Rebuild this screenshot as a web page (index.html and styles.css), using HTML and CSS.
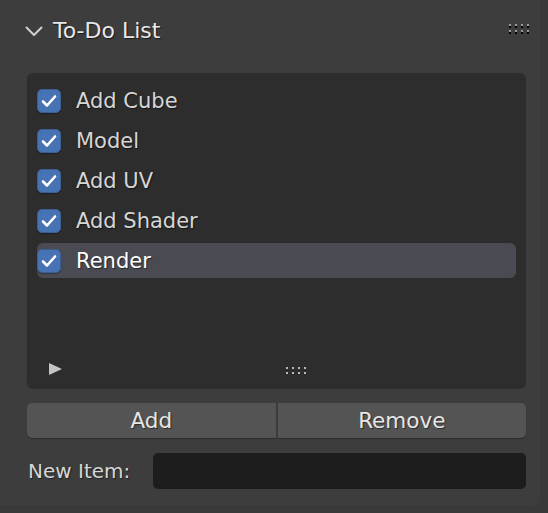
FILE: index.html
```html
<!DOCTYPE html>
<html>
<head>
<meta charset="utf-8">
<link rel="stylesheet" href="styles.css">
</head>
<body>
<div class="panel">
  <div class="header">
    <svg class="chevron" width="18" height="11" viewBox="0 0 18 11"><path d="M1.5 1.5 L9 9 L16.5 1.5" fill="none" stroke="#d0d0d0" stroke-width="2" stroke-linecap="round" stroke-linejoin="round"/></svg>
    <span class="title">To-Do List</span>
    <svg class="grip" width="22" height="10" viewBox="0 0 22 10">
      <g fill="#000"><rect x="1" y="1" width="2" height="3"/><rect x="7" y="1" width="2" height="3"/><rect x="13" y="1" width="2" height="3"/><rect x="19" y="1" width="2" height="3"/><rect x="1" y="7" width="2" height="3"/><rect x="7" y="7" width="2" height="3"/><rect x="13" y="7" width="2" height="3"/><rect x="19" y="7" width="2" height="3"/></g>
      <g fill="#9a9a9a"><rect x="1" y="0" width="2" height="2"/><rect x="7" y="0" width="2" height="2"/><rect x="13" y="0" width="2" height="2"/><rect x="19" y="0" width="2" height="2"/><rect x="1" y="6" width="2" height="2"/><rect x="7" y="6" width="2" height="2"/><rect x="13" y="6" width="2" height="2"/><rect x="19" y="6" width="2" height="2"/></g>
    </svg>
  </div>
  <div class="content">
    <div class="list">
      <div class="rows">
        <div class="row"><span class="check"><svg width="16" height="14" viewBox="0 0 16 14"><path d="M2 7.5 L6 11.5 L14 2.5" fill="none" stroke="#fff" stroke-width="2.6" stroke-linecap="round" stroke-linejoin="round"/></svg></span><span class="label">Add Cube</span></div>
        <div class="row"><span class="check"><svg width="16" height="14" viewBox="0 0 16 14"><path d="M2 7.5 L6 11.5 L14 2.5" fill="none" stroke="#fff" stroke-width="2.6" stroke-linecap="round" stroke-linejoin="round"/></svg></span><span class="label">Model</span></div>
        <div class="row"><span class="check"><svg width="16" height="14" viewBox="0 0 16 14"><path d="M2 7.5 L6 11.5 L14 2.5" fill="none" stroke="#fff" stroke-width="2.6" stroke-linecap="round" stroke-linejoin="round"/></svg></span><span class="label">Add UV</span></div>
        <div class="row"><span class="check"><svg width="16" height="14" viewBox="0 0 16 14"><path d="M2 7.5 L6 11.5 L14 2.5" fill="none" stroke="#fff" stroke-width="2.6" stroke-linecap="round" stroke-linejoin="round"/></svg></span><span class="label">Add Shader</span></div>
        <div class="row selected"><span class="check"><svg width="16" height="14" viewBox="0 0 16 14"><path d="M2 7.5 L6 11.5 L14 2.5" fill="none" stroke="#fff" stroke-width="2.6" stroke-linecap="round" stroke-linejoin="round"/></svg></span><span class="label">Render</span></div>
      </div>
      <div class="list-foot">
        <svg class="tri" width="13" height="12" viewBox="0 0 13 12"><path d="M0 0 L13 6 L0 12 Z" fill="#c4c4c4"/></svg>
        <svg class="lgrip" width="22" height="8" viewBox="0 0 22 8"><g fill="#b8b8b8"><rect x="0" y="0" width="2" height="2"/><rect x="6" y="0" width="2" height="2"/><rect x="12" y="0" width="2" height="2"/><rect x="18" y="0" width="2" height="2"/><rect x="0" y="5" width="2" height="2"/><rect x="6" y="5" width="2" height="2"/><rect x="12" y="5" width="2" height="2"/><rect x="18" y="5" width="2" height="2"/></g></svg>
      </div>
    </div>
    <div class="buttons">
      <div class="btn left">Add</div>
      <div class="btn right">Remove</div>
    </div>
    <div class="field">
      <span class="flabel">New Item:</span>
      <div class="input"></div>
    </div>
  </div>
</div>
</body>
</html>
```
FILE: styles.css
```css
html, body {
  margin: 0;
  padding: 0;
}
body {
  width: 548px;
  height: 513px;
  background: #393939;
  font-family: "DejaVu Sans", "Liberation Sans", sans-serif;
  overflow: hidden;
}
.panel {
  width: 540px;
  height: 505px;
  background: #3d3d3d;
  border-bottom-right-radius: 6px;
  display: flex;
  flex-direction: column;
}
.header {
  height: 62px;
  display: flex;
  align-items: center;
  padding-left: 25px;
  padding-right: 10px;
  box-sizing: border-box;
}
.title {
  margin-left: 10px;
  font-size: 22px;
  color: #e8e8e8;
  text-shadow: 1px 1px 1px rgba(0,0,0,0.6);
  flex: 1;
  margin-top: -2px;
}
.grip {
  margin-top: -4px;
}
.content {
  margin-top: 11px;
  padding: 0 14px 0 27px;
  display: flex;
  flex-direction: column;
}
.list {
  height: 315px;
  background: #2d2d2d;
  border-radius: 6px;
  box-shadow: 0 1px 1px rgba(0,0,0,0.25);
  padding: 10px 10px 0 10px;
  box-sizing: border-box;
  display: flex;
  flex-direction: column;
}
.rows {
  flex: 1;
  display: flex;
  flex-direction: column;
  gap: 5px;
}
.row {
  height: 35px;
  display: flex;
  align-items: center;
  border-radius: 6px;
}
.row.selected {
  background: #4a4a52;
}
.check {
  width: 24px;
  height: 24px;
  box-sizing: border-box;
  border-radius: 5px;
  background: #4772b3;
  border: 1px solid #3a5f98;
  display: flex;
  align-items: center;
  justify-content: center;
  box-shadow: 0 1px 1px rgba(0,0,0,0.3);
}
.label {
  margin-left: 15px;
  font-size: 21px;
  color: #d6d6d6;
  text-shadow: 1px 1px 1px rgba(0,0,0,0.5);
}
.row.selected .label {
  color: #ffffff;
}
.list-foot {
  height: 44px;
  display: flex;
  align-items: center;
  padding: 0 0 0 12px;
  box-sizing: border-box;
}
.tri {
  margin-top: 6px;
}
.lgrip {
  margin-left: 224px;
  margin-top: 10px;
}
.buttons {
  margin-top: 15px;
  height: 35px;
  display: flex;
  gap: 2px;
}
.btn {
  flex: 1;
  background: #545454;
  display: flex;
  align-items: center;
  justify-content: center;
  font-size: 21.5px;
  color: #e6e6e6;
  text-shadow: 1px 1px 1px rgba(0,0,0,0.5);
  box-shadow: 0 1px 1px rgba(0,0,0,0.3);
}
.btn.left {
  border-radius: 5px 0 0 5px;
}
.btn.right {
  border-radius: 0 5px 5px 0;
}
.field {
  margin-top: 15px;
  height: 36px;
  display: flex;
  align-items: center;
}
.flabel {
  width: 125px;
  font-size: 20px;
  color: #d6d6d6;
  text-shadow: 1px 1px 1px rgba(0,0,0,0.5);
  margin-left: 1px;
}
.input {
  flex: 1;
  height: 36px;
  background: #1d1d1d;
  border-radius: 5px;
}
```
